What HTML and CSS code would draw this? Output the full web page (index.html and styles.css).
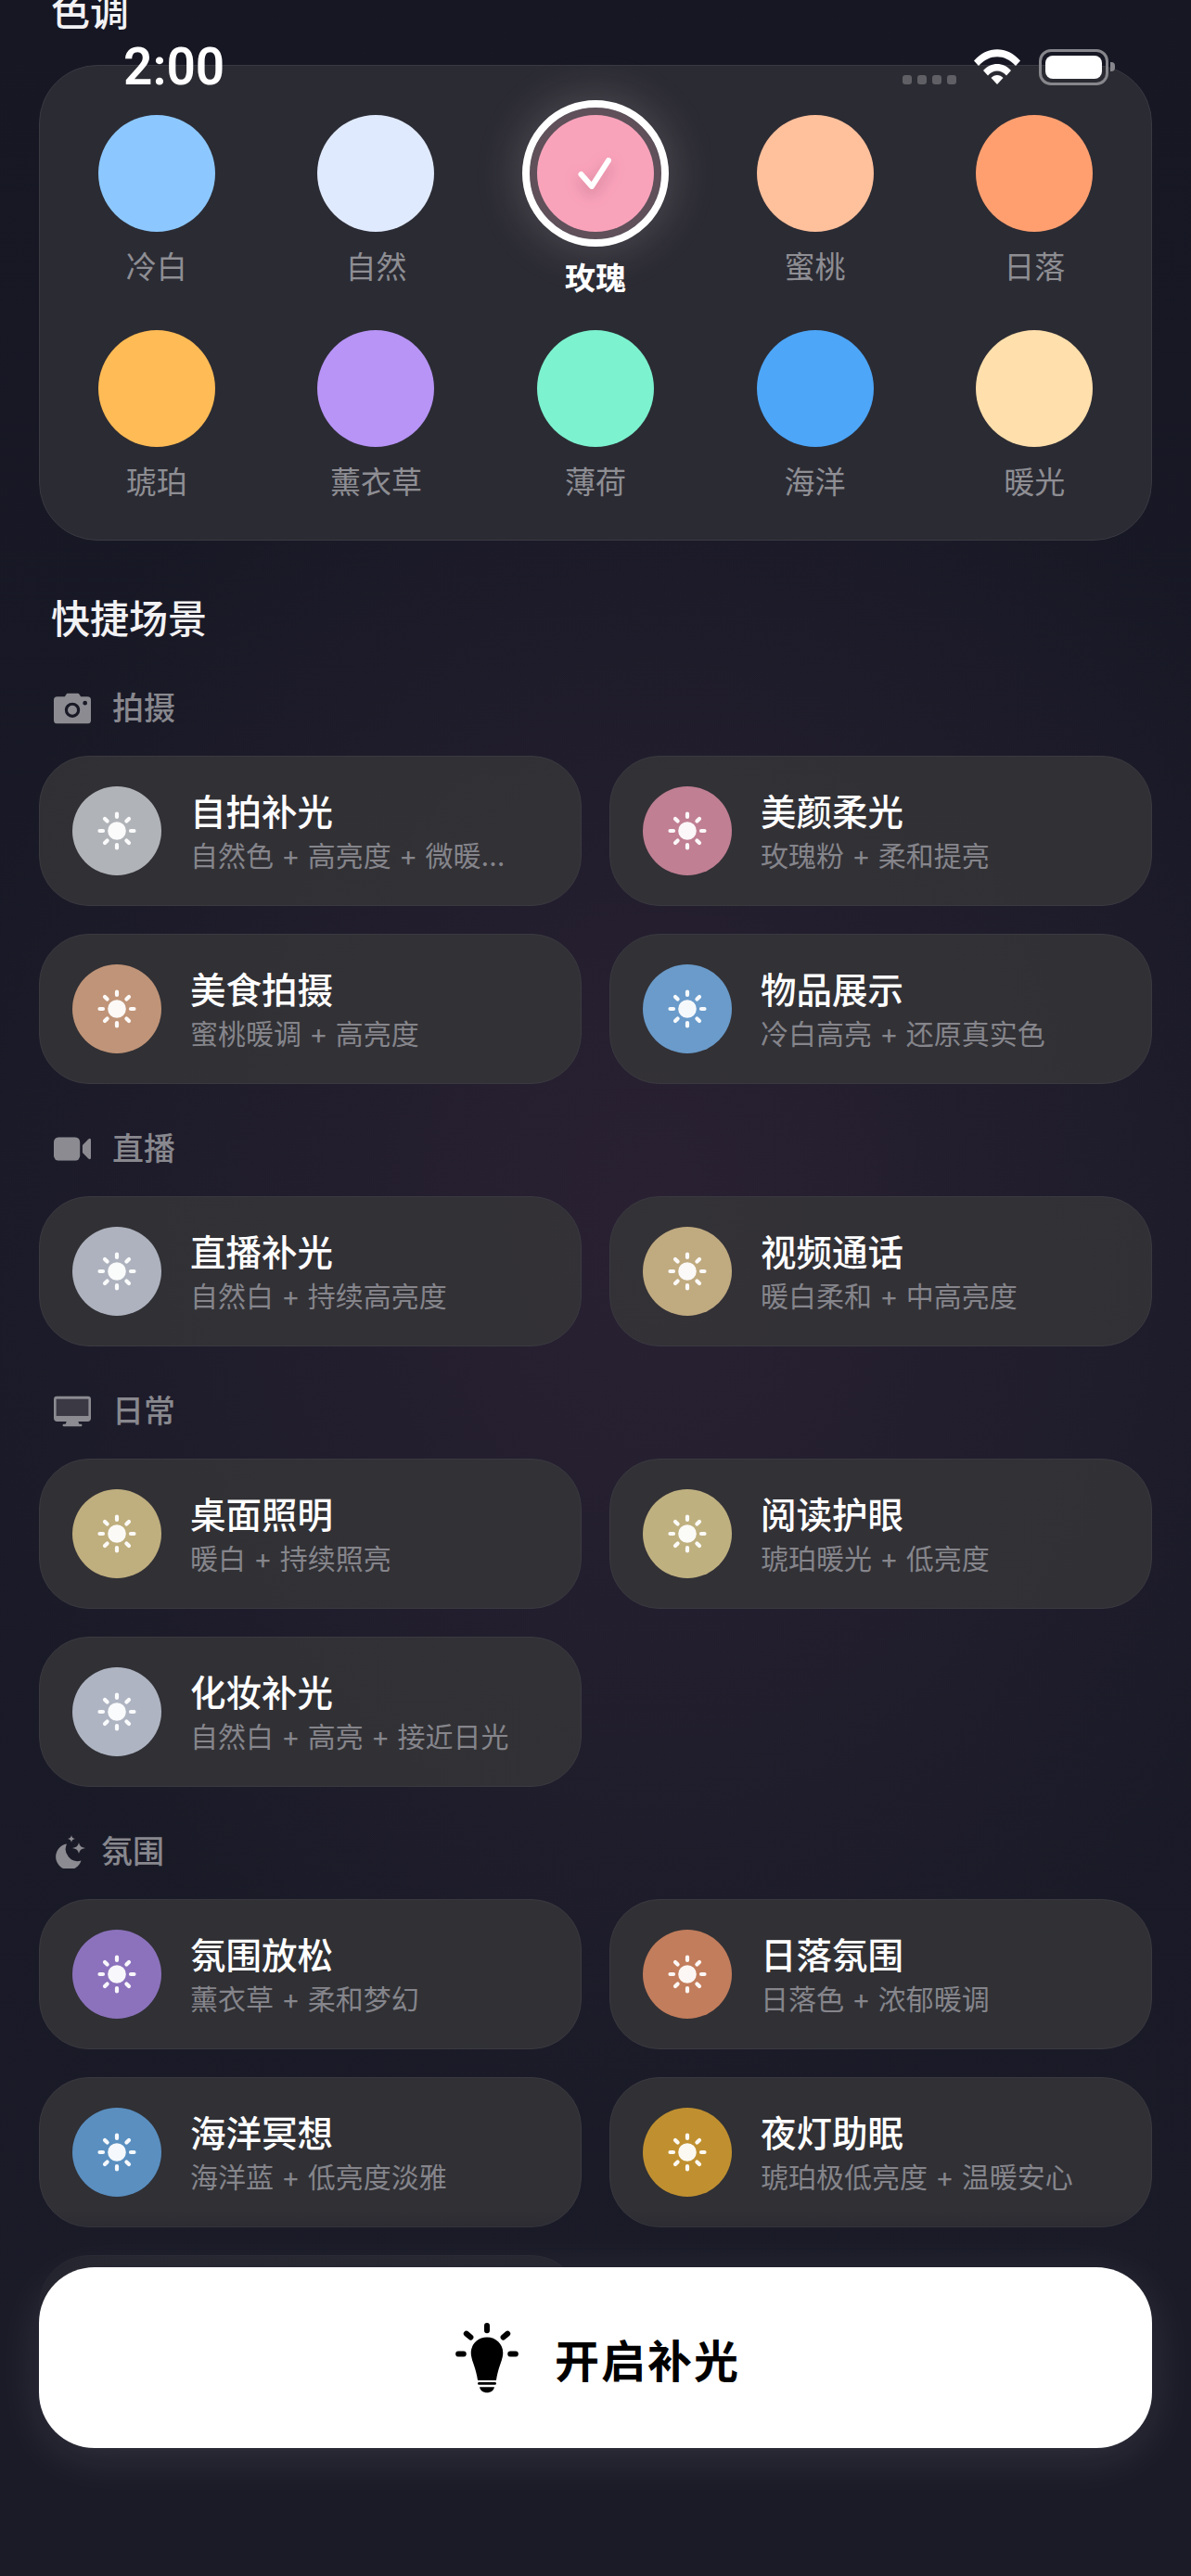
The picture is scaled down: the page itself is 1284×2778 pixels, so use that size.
FILE: index.html
```html
<!DOCTYPE html>
<html lang="zh-CN">
<head>
<meta charset="utf-8">
<title>色调</title>
<link rel="stylesheet" href="styles.css">
</head>
<body>
<svg class="defs" width="0" height="0" aria-hidden="true">
  <symbol id="sun" viewBox="0 0 44 44">
    <circle cx="22" cy="22" r="9.800" fill="currentColor"/>
    <g stroke="currentColor" stroke-width="4.200" stroke-linecap="round">
      <path d="M22 3.500v3.500M22 37v3.500M3.500 22h3.500M37 22h3.500M9 9l2.600 2.600M32.400 32.400l2.600 2.600M9 35l2.600-2.600M32.400 11.600l2.600-2.600"/>
    </g>
  </symbol>
</svg>
<div class="screen">
  <main class="scroll">
    <h2 class="heading heading-tone">色调</h2>
    <section class="panel">
      <div class="tone"><span class="swatch c1"></span><span class="tone-name">冷白</span></div>
      <div class="tone"><span class="swatch c2"></span><span class="tone-name">自然</span></div>
      <div class="tone is-selected">
        <span class="swatch c3">
          <svg class="check" viewBox="0 0 48 48"><path d="M8.500 25 L20 38 L38 10" fill="none" stroke="#fff" stroke-width="6" stroke-linecap="round" stroke-linejoin="round"/></svg>
        </span>
        <span class="tone-name">玫瑰</span>
      </div>
      <div class="tone"><span class="swatch c4"></span><span class="tone-name">蜜桃</span></div>
      <div class="tone"><span class="swatch c5"></span><span class="tone-name">日落</span></div>
      <div class="tone"><span class="swatch c6"></span><span class="tone-name">琥珀</span></div>
      <div class="tone"><span class="swatch c7"></span><span class="tone-name">薰衣草</span></div>
      <div class="tone"><span class="swatch c8"></span><span class="tone-name">薄荷</span></div>
      <div class="tone"><span class="swatch c9"></span><span class="tone-name">海洋</span></div>
      <div class="tone"><span class="swatch c10"></span><span class="tone-name">暖光</span></div>
    </section>

    <h2 class="heading heading-scenes">快捷场景</h2>

    <section class="group">
      <h3 class="group-head">
        <svg class="gi gi-camera" viewBox="0 0 44 36"><path fill-rule="evenodd" d="M6 4h7l2.200-3.200A2 2 0 0 1 16.800 0h11.400a2 2 0 0 1 1.600.8L32 4h8a4 4 0 0 1 4 4v24a4 4 0 0 1-4 4H4a4 4 0 0 1-4-4V8a4 4 0 0 1 4-4zm16 7a9 9 0 1 0 0 18 9 9 0 0 0 0-18zm0 3.500a5.500 5.500 0 1 1 0 11 5.500 5.500 0 0 1 0-11zM37 9a2.600 2.600 0 1 0 0 5.200a2.600 2.600 0 0 0 0-5.200z"/></svg>
        <span>拍摄</span>
      </h3>
      <div class="cards">
        <article class="card"><span class="badge b1"><svg class="sun"><use href="#sun"/></svg></span><div class="card-text"><h4>自拍补光</h4><p>自然色 + 高亮度 + 微暖柔光效果</p></div></article>
        <article class="card"><span class="badge b2"><svg class="sun"><use href="#sun"/></svg></span><div class="card-text"><h4>美颜柔光</h4><p>玫瑰粉 + 柔和提亮</p></div></article>
        <article class="card"><span class="badge b3"><svg class="sun"><use href="#sun"/></svg></span><div class="card-text"><h4>美食拍摄</h4><p>蜜桃暖调 + 高亮度</p></div></article>
        <article class="card"><span class="badge b4"><svg class="sun"><use href="#sun"/></svg></span><div class="card-text"><h4>物品展示</h4><p>冷白高亮 + 还原真实色</p></div></article>
      </div>
    </section>

    <section class="group">
      <h3 class="group-head">
        <svg class="gi gi-video" viewBox="0 0 44 28"><rect x="0" y="0" width="31" height="28" rx="6"/><path d="M34 9.500 L41 2.500 Q44 0.500 44 4 V24 Q44 27.500 41 25.500 L34 18.500 Z"/></svg>
        <span>直播</span>
      </h3>
      <div class="cards">
        <article class="card"><span class="badge b5"><svg class="sun"><use href="#sun"/></svg></span><div class="card-text"><h4>直播补光</h4><p>自然白 + 持续高亮度</p></div></article>
        <article class="card"><span class="badge b6"><svg class="sun"><use href="#sun"/></svg></span><div class="card-text"><h4>视频通话</h4><p>暖白柔和 + 中高亮度</p></div></article>
      </div>
    </section>

    <section class="group">
      <h3 class="group-head">
        <svg class="gi gi-monitor" viewBox="0 0 44 36"><rect x="3" y="3" width="38" height="21" fill="#3b3944"/><path fill-rule="evenodd" d="M4 0h36a4 4 0 0 1 4 4v22a4 4 0 0 1-4 4H29l1 3h2a1.500 1.500 0 0 1 0 3H12a1.500 1.500 0 0 1 0-3h2l1-3H4a4 4 0 0 1-4-4V4a4 4 0 0 1 4-4zm-1 3.500v20h38v-20z"/></svg>
        <span>日常</span>
      </h3>
      <div class="cards">
        <article class="card"><span class="badge b7"><svg class="sun"><use href="#sun"/></svg></span><div class="card-text"><h4>桌面照明</h4><p>暖白 + 持续照亮</p></div></article>
        <article class="card"><span class="badge b8"><svg class="sun"><use href="#sun"/></svg></span><div class="card-text"><h4>阅读护眼</h4><p>琥珀暖光 + 低亮度</p></div></article>
        <article class="card"><span class="badge b9"><svg class="sun"><use href="#sun"/></svg></span><div class="card-text"><h4>化妆补光</h4><p>自然白 + 高亮 + 接近日光</p></div></article>
      </div>
    </section>

    <section class="group">
      <h3 class="group-head group-head-tight">
        <svg class="gi gi-moon" viewBox="0 0 34 36"><path d="M14 9.500 A14 14 0 1 0 29.500 27.500 A13 13 0 0 1 14 9.500 Z"/><path d="M27 8 Q27.700 13.300 34 14 Q27.700 14.700 27 20 Q26.300 14.700 20 14 Q26.300 13.300 27 8 Z"/><path d="M19 0 Q19.400 3.600 23 4 Q19.400 4.400 19 8 Q18.600 4.400 15 4 Q18.600 3.600 19 0 Z"/></svg>
        <span>氛围</span>
      </h3>
      <div class="cards">
        <article class="card"><span class="badge b10"><svg class="sun"><use href="#sun"/></svg></span><div class="card-text"><h4>氛围放松</h4><p>薰衣草 + 柔和梦幻</p></div></article>
        <article class="card"><span class="badge b11"><svg class="sun"><use href="#sun"/></svg></span><div class="card-text"><h4>日落氛围</h4><p>日落色 + 浓郁暖调</p></div></article>
        <article class="card"><span class="badge b12"><svg class="sun"><use href="#sun"/></svg></span><div class="card-text"><h4>海洋冥想</h4><p>海洋蓝 + 低亮度淡雅</p></div></article>
        <article class="card"><span class="badge b13"><svg class="sun"><use href="#sun"/></svg></span><div class="card-text"><h4>夜灯助眠</h4><p>琥珀极低亮度 + 温暖安心</p></div></article>
        <article class="card"></article>
      </div>
    </section>
  </main>

  <header class="status">
    <span class="time">2:00</span>
    <div class="status-icons">
      <span class="dots"><i></i><i></i><i></i><i></i></span>
      <svg class="wifi" viewBox="0 0 50 38"><path d="M0 12.500 C14 -4 36 -4 50 12.500 L45 18 C33 5 17 5 5 18 Z" fill="#fff"/><path d="M10 23 C18 13.500 32 13.500 40 23 L35 28.500 C29 21.800 21 21.800 15 28.500 Z" fill="#fff"/><path d="M18.500 31 C22 27 28 27 31.500 31 L25 38 Z" fill="#fff"/></svg>
      <span class="battery"><span class="battery-fill"></span></span>
      <span class="battery-cap"></span>
    </div>
  </header>

  <footer class="dock">
    <button class="cta" type="button">
      <svg class="bulb" viewBox="60 72 210 232">
        <path d="M165 122C135 122 113 145 113 172C113 197 128 215 135 262H195C202 215 217 197 217 172C217 145 195 122 165 122Z"/>
        <rect x="135" y="268" width="60" height="8" rx="4"/>
        <path d="M141 284H189C187 296 176 302 165 302C154 302 143 296 141 284Z"/>
        <g stroke="#000" stroke-width="18" stroke-linecap="round" fill="none">
          <path d="M165 84V100M98 110L112 122M232 110L218 122M72 176H89M241 176H258"/>
        </g>
      </svg>
      <span class="cta-label">开启补光</span>
    </button>
  </footer>
</div>
</body>
</html>
```

FILE: styles.css
```css
* { box-sizing: border-box; }

html, body {
  margin: 0;
  padding: 0;
  background: #171823;
}

.defs { position: absolute; }

.screen {
  position: relative;
  width: 1284px;
  height: 2778px;
  overflow: hidden;
  color: #fff;
  font-family: Inter, "Noto Sans CJK SC", "Noto Sans", sans-serif;
  background:
    radial-gradient(ellipse 760px 1000px at 55% 47%, rgba(82, 52, 78, 0.28), rgba(82, 52, 78, 0) 100%),
    linear-gradient(180deg, #161723 0%, #1a1a28 50%, #1a1b27 100%);
}

.scroll {
  margin-top: -12px;
  padding: 0 42px;
}

.heading {
  margin: 0;
  padding-left: 13px;
  font-size: 42px;
  line-height: 50px;
  font-weight: 500;
  color: #f2f2f4;
}

.heading-tone { margin-bottom: 32px; }

.heading-scenes {
  margin-top: 60px;
  margin-bottom: 46px;
}

/* Tone panel */
.panel {
  display: grid;
  grid-template-columns: repeat(5, 1fr);
  row-gap: 33px;
  padding: 52.500px 7.500px 38.500px;
  border: 1.500px solid #393942;
  border-radius: 63px;
  background: #2b2b33;
}

.tone {
  display: flex;
  flex-direction: column;
  align-items: center;
}

.swatch {
  display: flex;
  align-items: center;
  justify-content: center;
  width: 126px;
  height: 126px;
  border-radius: 50%;
}

.tone-name {
  margin-top: 16.500px;
  font-size: 33px;
  line-height: 45px;
  color: #8e8e93;
}

.is-selected .swatch {
  outline: 8px solid #fff;
  outline-offset: 8px;
  box-shadow: 0 0 0 8px #5f505a, 0 0 46px 24px rgba(255, 225, 235, 0.15);
}

.is-selected .tone-name {
  margin-top: 28px;
  color: #fff;
  font-weight: 700;
}

.check {
  width: 48px;
  height: 48px;
  filter: drop-shadow(0 6px 8px rgba(90, 30, 50, 0.3));
}

.c1 { background: #8cc8ff; }
.c2 { background: #e0eaff; }
.c3 { background: #f9a3bb; }
.c4 { background: #ffc09c; }
.c5 { background: #ff9f70; }
.c6 { background: #ffbb55; }
.c7 { background: #b794f6; }
.c8 { background: #7cf2cf; }
.c9 { background: #4da6f8; }
.c10 { background: #ffdfac; }

/* Scene groups */
.group { margin-bottom: 45px; }

.group-head {
  display: flex;
  align-items: center;
  gap: 19px;
  height: 50px;
  margin: 0 0 26px;
  padding-left: 16px;
  font-size: 34px;
  line-height: 50px;
  font-weight: 500;
  color: #88888e;
}

.gi {
  flex: none;
  fill: #8b8b91;
  transform-origin: left center;
}

.gi-camera { width: 44px; height: 36px; transform: scale(0.91); }
.gi-video { width: 44px; height: 28px; transform: scale(0.91); }
.gi-monitor { width: 44px; height: 36px; transform: scale(0.91); }
.gi-moon { width: 34px; height: 36px; }
.group-head-tight { gap: 17px; }

.cards {
  display: grid;
  grid-template-columns: 1fr 1fr;
  gap: 30px;
}

.card {
  display: flex;
  align-items: center;
  gap: 31.500px;
  min-width: 0;
  height: 162px;
  padding: 0 60px 0 34.500px;
  border: 1.500px solid #3a3940;
  border-radius: 54px;
  background: rgba(54, 54, 56, 0.82);
}

.badge {
  flex: none;
  display: flex;
  align-items: center;
  justify-content: center;
  width: 96px;
  height: 96px;
  border-radius: 50%;
  color: rgba(255, 255, 255, 0.94);
}

.sun {
  width: 44px;
  height: 44px;
}

.card-text {
  min-width: 0;
  padding-top: 4px;
}

.card-text h4 {
  margin: 0 0 3.500px;
  font-size: 38.500px;
  line-height: 48px;
  font-weight: 500;
  color: #fff;
}

.card-text p {
  margin: 0;
  font-size: 30px;
  line-height: 40px;
  color: #85858b;
  white-space: nowrap;
  overflow: hidden;
  text-overflow: ellipsis;
}

.b1 { background: #b0b3b8; }
.b2 { background: #c07f93; }
.b3 { background: #c09478; }
.b4 { background: #6a9bca; }
.b5 { background: #adb2be; }
.b6 { background: #c0aa80; }
.b7 { background: #bfae7e; }
.b8 { background: #bfb080; }
.b9 { background: #aeb4c2; }
.b10 { background: #8c72bc; }
.b11 { background: #c27d5c; }
.b12 { background: #5a8fc0; }
.b13 { background: #c09030; }

/* Status bar */
.status {
  position: absolute;
  top: 40px;
  left: 133px;
  right: 82px;
  display: flex;
  align-items: center;
  justify-content: space-between;
  height: 64px;
}

.time {
  font-family: Roboto, "Liberation Sans", sans-serif;
  font-size: 55px;
  line-height: 64px;
  font-weight: 600;
}

.status-icons {
  display: flex;
  align-items: center;
}

.dots {
  display: flex;
  gap: 6px;
  margin-top: 28px;
  margin-right: 19px;
}

.dots i {
  width: 10px;
  height: 10px;
  border-radius: 3px;
  background: #5f5f65;
}

.wifi {
  width: 50px;
  height: 38px;
  margin-right: 20px;
}

.battery {
  display: block;
  width: 75px;
  height: 39px;
  padding: 4px;
  border: 3px solid #86868c;
  border-radius: 13px;
}

.battery-fill {
  display: block;
  width: 100%;
  height: 100%;
  border-radius: 8px;
  background: #fff;
}

.battery-cap {
  width: 5px;
  height: 10px;
  margin-left: 2px;
  border-radius: 0 4px 4px 0;
  background: #86868c;
}

/* Bottom action */
.dock {
  position: absolute;
  left: 0;
  right: 0;
  bottom: 0;
  padding: 60px 42px 138px;
  background: linear-gradient(180deg, rgba(26, 27, 39, 0) 0, rgba(26, 27, 39, 0.7) 60px, #1a1b27 120px);
}

.cta {
  display: flex;
  align-items: center;
  justify-content: center;
  gap: 38px;
  width: 100%;
  height: 195px;
  padding: 0 0 0 4px;
  border: 0;
  border-radius: 60px;
  background: #fff;
  color: #000;
  font-family: inherit;
  font-size: 48px;
  font-weight: 700;
  letter-spacing: 2px;
  box-shadow: 0 10px 50px rgba(255, 255, 255, 0.1);
}

.bulb {
  width: 70px;
  height: 77px;
  fill: #000;
}
```
